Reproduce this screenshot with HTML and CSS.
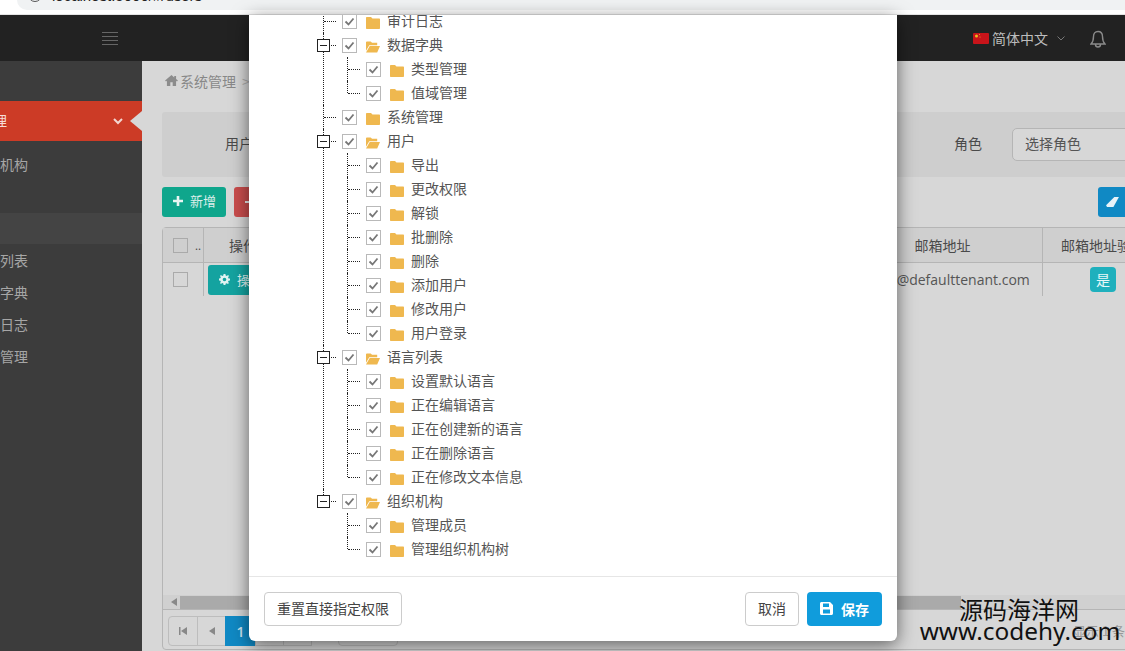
FILE: index.html
```html
<!DOCTYPE html>
<html lang="zh">
<head>
<meta charset="utf-8">
<title>用户</title>
<link rel="stylesheet" href="styles.css">
</head>
<body>
<div class="chrome"><div class="omnibox"><span class="omni-dot"></span><span class="omni-url">localhost:5000/#/users</span></div></div>
<div class="app">
  <header class="topbar">
    <span class="burger"><i></i><i></i><i></i><i></i></span>
    <span class="flag"><svg viewBox="0 0 16 11" width="16" height="11"><rect width="16" height="11" rx="1" fill="#c8141a"/><circle cx="3.5" cy="3" r="1.5" fill="#e8c020"/><circle cx="6.5" cy="1.6" r=".5" fill="#e8c020"/><circle cx="7" cy="4" r=".5" fill="#e8c020"/></svg></span>
    <span class="lang">简体中文</span>
    <svg class="lang-caret" viewBox="0 0 8 5" width="8" height="5"><path d="M.5.5 4 4 7.500.5" fill="none" stroke="#777" stroke-width="1"/></svg>
    <svg class="bell" viewBox="0 0 16 19" width="16" height="19"><path d="M8 1.500C5 1.500 3.500 3.700 3.500 6.500c0 4-1 6-2.500 7.500h14c-1.500-1.500-2.500-3.500-2.500-7.500C12.500 3.700 11 1.500 8 1.500ZM5.500 14.500c0 3.300 5 3.300 5 0" fill="none" stroke="#8a8a8a" stroke-width="1.400"/></svg>
  </header>
  <div class="layout">
    <aside class="sidebar">
      <div class="menu-item active"><span class="menu-text wide">系统管理</span><svg class="menu-caret" viewBox="0 0 10 7" width="10" height="7"><path d="M1 1l4 4 4-4" fill="none" stroke="#f3d6d0" stroke-width="2"/></svg></div>
      <div class="menu-item org"><span class="menu-text">组织机构</span></div>
      <div class="menu-item current"></div>
      <div class="menu-item sub"><span class="menu-text">语言列表</span></div>
      <div class="menu-item sub"><span class="menu-text">数据字典</span></div>
      <div class="menu-item sub"><span class="menu-text">审计日志</span></div>
      <div class="menu-item sub"><span class="menu-text">系统管理</span></div>
    </aside>
    <main class="main">
      <div class="main-inner">
        <div class="crumb"><svg viewBox="0 0 14 12" width="13" height="11"><path d="M7 0 0 6l1 1 1-.8V12h3.700V8h2.600v4H12V6.200l1 .8 1-1-2-1.700V1h-2v1.600Z" fill="#8c8c8c"/></svg><span>系统管理</span><span class="crumb-sep">&gt;</span></div>
        <div class="filter">
          <span class="filter-label">用户</span>
          <span class="filter-label">角色</span>
          <div class="select">选择角色</div>
        </div>
        <div class="toolbar">
          <button class="btn btn-add"><svg viewBox="0 0 10 10" width="10" height="10"><path d="M3.700 0h2.600v3.700H10v2.600H6.300V10H3.700V6.300H0V3.700h3.700Z" fill="#e8f5f2"/></svg><span>新增</span></button>
          <button class="btn btn-del"><i></i></button>
          <button class="btn btn-clear"><svg viewBox="0 0 14 12" width="13" height="11"><path d="M9 0h5L8 11H1l-1-2Z" fill="#e8f3f9"/></svg></button>
        </div>
        <section class="grid-box">
          <div class="grid-body">
            <div class="grid-row grid-head">
              <div class="cell c-check"><span class="box"></span><span class="dots">..</span></div>
              <div class="cell c-op">操作</div>
              <div class="cell c-fill"></div>
              <div class="cell c-mail">邮箱地址</div>
              <div class="cell c-verify">邮箱地址验证</div>
            </div>
            <div class="grid-row grid-data">
              <div class="cell c-check"><span class="box"></span></div>
              <div class="cell c-op"><span class="op-btn"><svg viewBox="0 0 12 12" width="11" height="11"><path d="M5 0h2l.3 1.600 1.200.5L9.900 1.200l1 1-1 1.400.5 1.200L12 5v2l-1.600.3-.5 1.200.9 1.400-1 1-1.400-.9-1.200.5L7 12H5l-.3-1.600-1.200-.5-1.400.9-1-1 .9-1.300-.5-1.200L0 7V5l1.500-.3.500-1.200-.9-1.300 1-1 1.400.9 1.200-.5ZM6 4a2 2 0 1 0 0 4 2 2 0 0 0 0-4Z" fill="#dff3f2"/></svg>操作</span></div>
              <div class="cell c-fill"></div>
              <div class="cell c-mail">admin@defaulttenant.com</div>
              <div class="cell c-verify"><span class="yes">是</span></div>
            </div>
          </div>
          <div class="hscroll">
            <svg viewBox="0 0 6 8" width="6" height="8"><path d="M6 0v8L0 4Z" fill="#888"/></svg>
            <span class="thumb"></span>
          </div>
          <div class="pager">
            <span class="pg"><svg viewBox="0 0 8 8" width="8" height="8"><path d="M0 0h1.500v8H0ZM8 0v8L2 4Z" fill="#888"/></svg></span>
            <span class="pg"><svg viewBox="0 0 6 8" width="6" height="8"><path d="M6 0v8L0 4Z" fill="#888"/></svg></span>
            <span class="pg pg-on">1</span>
            <span class="pg"></span>
            <span class="pg"></span>
            <span class="pg pg-size"></span>
            <span class="pg-info">显示 1 条记录</span>
          </div>
        </section>
      </div>
    </main>
  </div>
</div>

<div class="modal">
  <div class="modal-body">
    <ul class="tree">
      <li><div class="row"><span class="cb"></span><span class="fd"></span>审计日志</div></li>
      <li><div class="row open"><span class="exp"></span><span class="cb"></span><span class="fo"></span>数据字典</div>
        <ul>
          <li><div class="row"><span class="cb"></span><span class="fd"></span>类型管理</div></li>
          <li class="last"><div class="row"><span class="cb"></span><span class="fd"></span>值域管理</div></li>
        </ul>
      </li>
      <li><div class="row"><span class="cb"></span><span class="fd"></span>系统管理</div></li>
      <li><div class="row open"><span class="exp"></span><span class="cb"></span><span class="fo"></span>用户</div>
        <ul>
          <li><div class="row"><span class="cb"></span><span class="fd"></span>导出</div></li>
          <li><div class="row"><span class="cb"></span><span class="fd"></span>更改权限</div></li>
          <li><div class="row"><span class="cb"></span><span class="fd"></span>解锁</div></li>
          <li><div class="row"><span class="cb"></span><span class="fd"></span>批删除</div></li>
          <li><div class="row"><span class="cb"></span><span class="fd"></span>删除</div></li>
          <li><div class="row"><span class="cb"></span><span class="fd"></span>添加用户</div></li>
          <li><div class="row"><span class="cb"></span><span class="fd"></span>修改用户</div></li>
          <li class="last"><div class="row"><span class="cb"></span><span class="fd"></span>用户登录</div></li>
        </ul>
      </li>
      <li><div class="row open"><span class="exp"></span><span class="cb"></span><span class="fo"></span>语言列表</div>
        <ul>
          <li><div class="row"><span class="cb"></span><span class="fd"></span>设置默认语言</div></li>
          <li><div class="row"><span class="cb"></span><span class="fd"></span>正在编辑语言</div></li>
          <li><div class="row"><span class="cb"></span><span class="fd"></span>正在创建新的语言</div></li>
          <li><div class="row"><span class="cb"></span><span class="fd"></span>正在删除语言</div></li>
          <li class="last"><div class="row"><span class="cb"></span><span class="fd"></span>正在修改文本信息</div></li>
        </ul>
      </li>
      <li class="last"><div class="row open"><span class="exp"></span><span class="cb"></span><span class="fo"></span>组织机构</div>
        <ul>
          <li><div class="row"><span class="cb"></span><span class="fd"></span>管理成员</div></li>
          <li class="last"><div class="row"><span class="cb"></span><span class="fd"></span>管理组织机构树</div></li>
        </ul>
      </li>
    </ul>
  </div>
  <footer class="modal-foot">
    <button class="mbtn">重置直接指定权限</button>
    <span class="foot-gap"></span>
    <button class="mbtn mbtn-cancel">取消</button>
    <button class="mbtn mbtn-save"><svg viewBox="0 0 13 13" width="13" height="13"><path d="M0 1.500C0 .700.700 0 1.500 0H10l3 3v8.500c0 .8-.7 1.500-1.500 1.500h-10C.700 13 0 12.300 0 11.500ZM3 1.500V5h6V1.500ZM3 7.500V11.500h7V7.500Z" fill="#fff" fill-rule="evenodd"/></svg>保存</button>
  </footer>
</div>

<div class="watermark"><div class="wm-cn">源码海洋网</div><div class="wm-en">www.codehy.com</div></div>
</body>
</html>
```
FILE: styles.css
```css
* { box-sizing: border-box; }
html, body { margin: 0; height: 100%; }
body {
  width: 1125px; height: 651px; overflow: hidden; position: relative; background: #fff;
  font-family: "Noto Sans CJK SC", "Noto Sans", sans-serif; font-size: 14px; color: #555;
  display: flex; flex-direction: column;
}
ul { list-style: none; margin: 0; padding: 0; }
button { font-family: inherit; }

.chrome { height: 15px; flex: none; background: #fff; padding-left: 17px; border-bottom: 1px solid #e4e4e4; overflow: hidden; }
.omnibox { height: 10px; background: #f0f2f3; border-radius: 0 0 0 12px; display: flex; align-items: flex-end; padding-left: 11px; gap: 10px; overflow: hidden; }
.omni-dot { width: 14px; height: 14px; border: 1.500px solid #555; border-radius: 50%; flex: none; margin-bottom: 8px; }
.omni-url { font: 15px/14px "Liberation Sans", sans-serif; color: #222; margin-bottom: 7px; }

.app { flex: 1; min-height: 0; display: flex; flex-direction: column; }
.topbar { height: 46px; flex: none; background: #222; display: flex; align-items: center; padding-left: 102px; }
.burger { width: 16px; display: flex; flex-direction: column; gap: 3px; }
.burger i { height: 1px; background: #666; }
.flag { margin-left: 855px; display: flex; }
.lang { margin-left: 3px; color: #bdbdbd; line-height: 20px; }
.lang-caret { margin-left: 9px; }
.bell { margin-left: 25px; margin-top: 2px; }

.layout { flex: 1; min-height: 0; display: flex; }
.sidebar { width: 142px; flex: none; background: #3c3c3c; padding-top: 40px; overflow: hidden; }
.menu-item { height: 32px; display: flex; align-items: center; color: #a6a6a6; position: relative; }
.menu-text { margin: 0 0 4px -28px; white-space: nowrap; }
.menu-text.wide { margin: 0 0 2px -49px; color: #f6ddd8; }
.menu-item.active { height: 40px; background: #cc3b26; }
.menu-item.active::after {
  content: ""; position: absolute; right: 0; top: 10px;
  border: 10px solid transparent; border-left-width: 0; border-right: 12px solid #d7d7d7;
}
.menu-caret { position: absolute; left: 113px; top: 17px; }
.menu-item.org { height: 50px; }
.menu-item.current { height: 31px; margin-top: 22px; margin-bottom: 2px; background: #444; }

.main { flex: 1; min-width: 0; overflow: hidden; background: #d7d7d7; }
.main-inner { width: 1100px; margin-left: 20px; }
.crumb { height: 51px; display: flex; align-items: center; color: #888; padding: 0 3px 12px; gap: 2px; }
.crumb-sep { margin-left: 4px; color: #aaa; }
.filter { height: 65px; background: #cecece; border-radius: 3px; display: grid; grid-template-columns: 729px 58px 150px; align-items: center; padding-left: 63px; color: #4a4a4a; }
.filter-label { padding-bottom: 3px; }
.select { height: 33px; border: 1px solid #b5b5b5; border-radius: 5px; background: #d7d7d7; display: flex; align-items: center; padding: 0 0 3px 12px; color: #555; }
.toolbar { display: flex; margin-top: 10px; height: 30px; gap: 8px; }
.btn { height: 30px; border: 0; border-radius: 3px; padding: 0; display: flex; align-items: center; justify-content: center; font-size: 13px; }
.btn-add { width: 64px; background: #0fa68c; color: #dcefeb; gap: 7px; padding-left: 1px; }
.btn-add svg { margin-bottom: 2px; }
.btn-add span { margin-bottom: 3px; }
.btn-del { width: 70px; background: #c94c4c; justify-content: flex-start; padding-left: 11px; }
.btn-del i { width: 6px; height: 2px; background: #eee; flex: none; }
.btn-clear { width: 70px; background: #1089c4; margin-left: 786px; justify-content: flex-start; padding-left: 8px; }

.grid-box { margin-top: 10px; height: 423px; border: 1px solid #b5b5b5; border-radius: 4px; display: flex; flex-direction: column; }
.grid-body { flex: 1; min-height: 0; }
.grid-row { display: flex; }
.grid-head { height: 35px; background: #cfcfcf; border-bottom: 1px solid #b5b5b5; color: #4a4a4a; }
.grid-data { height: 33px; }
.cell { display: flex; align-items: center; justify-content: center; border-right: 1px solid #b5b5b5; flex: none; white-space: nowrap; }
.c-check { width: 41px; justify-content: flex-start; padding-left: 10px; }
.c-op { width: 79px; }
.grid-data .c-op { justify-content: flex-start; padding-left: 4px; overflow: hidden; }
.c-fill { width: 560px; border-right: 0; }
.c-mail { width: 200px; font-family: "Open Sans", "Noto Sans CJK SC", sans-serif; color: #555; padding-bottom: 1px; }
.grid-head .c-mail { font-family: inherit; color: #4a4a4a; padding-bottom: 0; }
.c-verify { width: 120px; border-right: 0; }
.box { width: 15px; height: 15px; border: 1px solid #aaa; flex: none; }
.dots { margin-left: 7px; font-size: 11px; line-height: 11px; }
.op-btn { width: 72px; height: 30px; border-radius: 3px; background: #14a3a0; color: #dff3f2; font-size: 13px; display: flex; align-items: center; padding-left: 11px; gap: 7px; }
.yes { width: 26px; height: 25px; border-radius: 4px; background: #1fb0bd; color: #e6f7f8; display: flex; align-items: center; justify-content: center; padding-bottom: 2px; }

.hscroll { height: 15px; flex: none; background: #d0d0d0; display: flex; align-items: center; padding-left: 8px; border-bottom: 1px solid #b5b5b5; }
.thumb { margin-left: 3px; width: 781px; height: 13px; background: #aaa; }
.pager { height: 39px; flex: none; padding: 6px 0 0 5px; display: flex; }
.pg { width: 29px; height: 30px; border: 1px solid #bdbdbd; margin-left: -1px; display: flex; align-items: center; justify-content: center; }
.pg:first-child { border-radius: 4px 0 0 4px; margin-left: 0; width: 30px; }
.pg-on { background: #1089c4; border-color: #1089c4; color: #cde6f2; width: 31px; font-family: "Open Sans", sans-serif; font-weight: 600; }
.pg-size { width: 60px; margin-left: 26px; border-radius: 4px; }
.pg-info { margin-left: 675px; color: #999; font-size: 13px; line-height: 30px; white-space: nowrap; }

.modal {
  position: absolute; left: 249px; top: 15px; width: 648px; height: 626px;
  background: #fff; border-radius: 0 0 6px 6px; box-shadow: 0 4px 18px rgba(0,0,0,.55);
  display: flex; flex-direction: column;
}
.modal-body { height: 562px; flex: none; overflow: hidden; border-bottom: 1px solid #e6e6e6; padding-left: 74px; }
.tree { margin-top: -6px; color: #555; line-height: 24px; }
.tree ul { margin-left: 24px; }
.tree li { position: relative; }
.tree li::before { content: ""; position: absolute; left: 0; top: 0; bottom: 0; border-left: 1px dotted #222; }
.tree li.last::before { bottom: auto; height: 12px; }
.row { height: 24px; display: flex; align-items: center; padding: 0 0 2px 19px; position: relative; white-space: nowrap; }
.row::before { content: ""; position: absolute; left: 1px; top: 12px; width: 12px; border-top: 1px dotted #222; }
.exp { position: absolute; left: -6px; top: 6px; width: 13px; height: 13px; border: 1px solid #222; background: #fff; }
.exp::after { content: ""; position: absolute; left: 2px; top: 5px; width: 7px; height: 1px; background: #222; }
.cb {
  width: 15px; height: 15px; margin: 2px 9px 0 0; border: 1px solid #b9b9b9; background: #fff; flex: none;
  background-image: url("data:image/svg+xml,%3Csvg xmlns='http://www.w3.org/2000/svg' viewBox='0 0 13 13'%3E%3Cpath d='M2.500 6.500 5.500 9.500 10.500 3.500' fill='none' stroke='%23777' stroke-width='1.800'/%3E%3C/svg%3E");
}
.fd, .fo { width: 14px; height: 12px; margin: 5px 7px 0 0; flex: none; background-repeat: no-repeat; background-size: 14px 12px; }
.fd { background-image: url("data:image/svg+xml,%3Csvg xmlns='http://www.w3.org/2000/svg' viewBox='0 0 14 12'%3E%3Cpath d='M1 0h4l1.500 1.500H13c.6 0 1 .4 1 1V11c0 .6-.4 1-1 1H1c-.6 0-1-.4-1-1V1c0-.6.400-1 1-1Z' fill='%23efb84f'/%3E%3C/svg%3E"); }
.fo { background-image: url("data:image/svg+xml,%3Csvg xmlns='http://www.w3.org/2000/svg' viewBox='0 0 15 12'%3E%3Cpath d='M1 0h4l1.500 1.500H12V4H3.500L0 10V1c0-.6.400-1 1-1ZM4 5h11l-3 7H0Z' fill='%23efb84f'/%3E%3C/svg%3E"); }

.modal-foot { flex: 1; display: flex; align-items: flex-start; padding: 15px 15px 0; gap: 8px; }
.foot-gap { flex: 1; }
.mbtn { height: 34px; border: 1px solid #ccc; border-radius: 4px; background: #fff; color: #444; font-size: 14px; padding: 0 12px 2px; line-height: 1; }
.mbtn-cancel { width: 54px; padding: 0 0 2px; }
.mbtn-save { width: 75px; padding: 0 0 1px; border: 0; background: #109cdc; color: #fff; font-weight: 700; display: flex; align-items: center; justify-content: center; gap: 8px; }

.watermark { position: absolute; left: 915px; top: 595px; width: 210px; text-align: center; color: #111; line-height: 1; }
.wm-cn { font-size: 24px; line-height: 28px; padding-right: 2px; }
.wm-en { font-family: "Noto Sans", sans-serif; font-size: 24.4px; line-height: 24px; margin-top: -4px; white-space: nowrap; }
```
